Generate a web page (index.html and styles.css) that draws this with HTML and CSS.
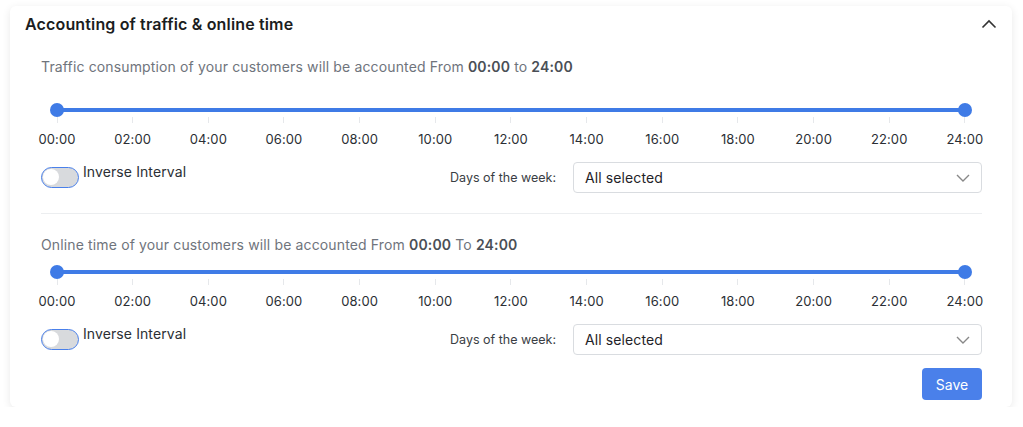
FILE: index.html
```html
<!doctype html>
<html lang="en">
<head>
    <meta charset="UTF-8">
    <title>Accounting of traffic &amp; online time</title>
    <link rel="stylesheet" href="styles.css">
</head>
<body>

<div class="card">
    <div class="card-head">
        <h2 class="card-title">Accounting of traffic &amp; online time</h2>
        <svg class="collapse" width="16" height="10" viewBox="0 0 16 10"><path d="M1.5 8.5L8 2l6.5 6.5" fill="none" stroke="#333" stroke-width="1.6"/></svg>
    </div>

    <div class="card-body">
        <div class="section">
            <p class="hint hint-first">Traffic consumption of your customers will be accounted From <b>00:00</b> to <b>24:00</b></p>
            <div class="slider">
                <span class="thumb thumb-start"></span>
                <span class="thumb thumb-end"></span>
            </div>
            <div class="scale">
                <div class="mark"><i></i>00:00</div>
                <div class="mark"><i></i>02:00</div>
                <div class="mark"><i></i>04:00</div>
                <div class="mark"><i></i>06:00</div>
                <div class="mark"><i></i>08:00</div>
                <div class="mark"><i></i>10:00</div>
                <div class="mark"><i></i>12:00</div>
                <div class="mark"><i></i>14:00</div>
                <div class="mark"><i></i>16:00</div>
                <div class="mark"><i></i>18:00</div>
                <div class="mark"><i></i>20:00</div>
                <div class="mark"><i></i>22:00</div>
                <div class="mark"><i></i>24:00</div>
            </div>
            <div class="controls">
                <label class="inverse"><span class="switch"><span class="knob"></span></span>Inverse Interval</label>
                <div class="days">
                    <span class="days-label">Days of the week:</span>
                    <div class="select">
                        <span>All selected</span>
                        <svg width="14" height="8" viewBox="0 0 14 8"><path d="M1 1l6 6 6-6" fill="none" stroke="#888" stroke-width="1.4"/></svg>
                    </div>
                </div>
            </div>
        </div>

        <hr class="divider">

        <div class="section">
            <p class="hint hint-second">Online time of your customers will be accounted From <b>00:00</b> To <b>24:00</b></p>
            <div class="slider">
                <span class="thumb thumb-start"></span>
                <span class="thumb thumb-end"></span>
            </div>
            <div class="scale">
                <div class="mark"><i></i>00:00</div>
                <div class="mark"><i></i>02:00</div>
                <div class="mark"><i></i>04:00</div>
                <div class="mark"><i></i>06:00</div>
                <div class="mark"><i></i>08:00</div>
                <div class="mark"><i></i>10:00</div>
                <div class="mark"><i></i>12:00</div>
                <div class="mark"><i></i>14:00</div>
                <div class="mark"><i></i>16:00</div>
                <div class="mark"><i></i>18:00</div>
                <div class="mark"><i></i>20:00</div>
                <div class="mark"><i></i>22:00</div>
                <div class="mark"><i></i>24:00</div>
            </div>
            <div class="controls">
                <label class="inverse"><span class="switch"><span class="knob"></span></span>Inverse Interval</label>
                <div class="days">
                    <span class="days-label">Days of the week:</span>
                    <div class="select">
                        <span>All selected</span>
                        <svg width="14" height="8" viewBox="0 0 14 8"><path d="M1 1l6 6 6-6" fill="none" stroke="#888" stroke-width="1.4"/></svg>
                    </div>
                </div>
            </div>
        </div>

        <div class="actions">
            <button class="save">Save</button>
        </div>
    </div>
</div>

</body>
</html>
```

FILE: styles.css
```css
*{margin:0;padding:0;box-sizing:border-box;}
body{
    background:#fff;
    font-family:Inter,"Noto Sans",sans-serif;
    color:#1f2328;
}
.card{
    width:1002px;
    margin:6px 0 0 10px;
    background:#fff;
    border-radius:6px;
    box-shadow:0 2px 9px rgba(0,0,0,.09);
    padding-bottom:7px;
}
.card-head{
    height:36px;
    display:flex;
    align-items:center;
    justify-content:space-between;
    padding:0 15px 0 15px;
}
.card-title{
    font-size:16px;
    font-weight:600;
    color:#1b1d21;
    letter-spacing:0.15px;
}
.collapse{margin-top:-1px;}
.card-body{
    padding:15px 30px 0 31px;
}
.hint{
    font-size:14px;
    line-height:20px;
    color:#6f747c;
    letter-spacing:0.14px;
}
.hint b{
    color:#4a4f56;
    font-weight:600;
}
.hint-first{margin-bottom:26px;}
.hint-second{margin-bottom:10px;}

/* range slider */
.slider{
    position:relative;
    height:14px;
    margin:0 17px 0 16px;
    display:flex;
    align-items:center;
}
.slider:before{
    content:"";
    flex:1;
    height:4px;
    background:#3f7be6;
    border-radius:2px;
}
.thumb{
    position:absolute;
    top:0;
    width:14px;
    height:14px;
    border-radius:50%;
    background:#3f7be6;
}
.thumb-start{left:-7px;}
.thumb-end{right:-7px;}

.scale{
    display:flex;
    justify-content:space-between;
    margin:0 -3px 0 -4px;
}
.mark{
    width:40px;
    display:flex;
    flex-direction:column;
    align-items:center;
    font-size:13px;
    line-height:16px;
    color:#2b2f35;
    letter-spacing:0.1px;
}
.mark i{
    width:1px;
    height:6px;
    background:#e6e8eb;
    margin-bottom:8px;
}

.controls{
    display:flex;
    justify-content:space-between;
    margin-top:15px;
}
.inverse{
    display:flex;
    align-items:flex-start;
    gap:4px;
    font-size:14px;
    line-height:20px;
    color:#2b2f35;
    letter-spacing:0.1px;
}
.switch{
    width:38px;
    height:21px;
    margin-top:5px;
    border:1.5px solid #4a80ea;
    border-radius:11px;
    background:#d8dadd;
    padding:1px;
}
.knob{
    display:block;
    width:16px;
    height:16px;
    border-radius:50%;
    background:#fff;
}
.days{
    display:flex;
    align-items:center;
    gap:17px;
}
.days-label{
    font-size:12.5px;
    color:#3a3e44;
}
.select{
    width:409px;
    height:31px;
    border:1px solid #d9dce0;
    border-radius:4px;
    display:flex;
    align-items:center;
    justify-content:space-between;
    padding:0 11px 0 11px;
    font-size:14px;
    color:#1f2328;
    letter-spacing:0.1px;
}
.divider{
    border:0;
    border-top:1px solid #eceef0;
    margin:20px 0 21px;
}
.actions{
    display:flex;
    justify-content:flex-end;
    margin-top:13px;
}
.save{
    width:60px;
    height:32px;
    border:0;
    border-radius:4px;
    background:#4a80ea;
    color:#fff;
    font-family:inherit;
    font-size:14px;
}
```
